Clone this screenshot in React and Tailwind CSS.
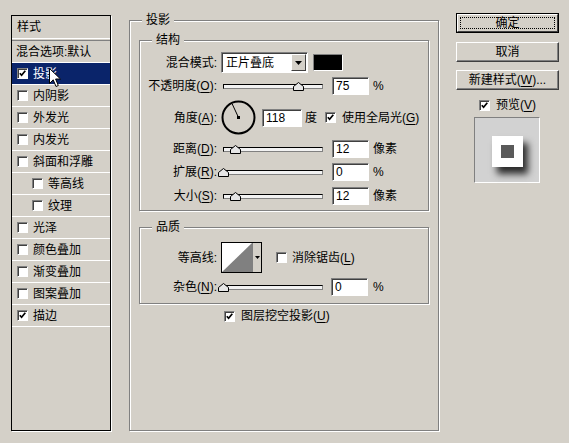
const effects = [
  { label: "混合选项:默认", plain: true },
  { label: "投影", checked: true, selected: true },
  { label: "内阴影" },
  { label: "外发光" },
  { label: "内发光" },
  { label: "斜面和浮雕" },
  { label: "等高线", indent: true },
  { label: "纹理", indent: true },
  { label: "光泽" },
  { label: "颜色叠加" },
  { label: "渐变叠加" },
  { label: "图案叠加" },
  { label: "描边", checked: true },
];

const sunken =
  "border border-[#808080] border-b-white border-r-white shadow-[inset_1px_1px_0_#404040]";

function U({ children }) {
  return <span className="underline underline-offset-[2px]">{children}</span>;
}

function CheckBox({ checked }) {
  return (
    <span
      className={`w-[11px] h-[11px] shrink-0 bg-white flex items-center justify-center ${sunken}`}
    >
      {checked && (
        <svg width="7" height="7" viewBox="0 0 7 7">
          <path d="M0.8 3.2 L2.6 5.3 L6.3 0.8" fill="none" stroke="black" strokeWidth="1.7" />
        </svg>
      )}
    </span>
  );
}

function Field({ value, className = "w-[37px]" }) {
  return (
    <div className={`h-[18px] bg-white pl-[3px] flex items-center ${sunken} ${className}`}>
      {value}
    </div>
  );
}

function Slider({ value }) {
  return (
    <div className="relative ml-[4px] w-[104px] h-[14px] flex items-center px-[2px]">
      <div className="w-full h-[5px] border border-black border-b-[#808080] border-r-[#808080] bg-[#f2f2f2]" />
      <svg
        className="absolute top-[3px]"
        style={{ left: value - 3.5 }}
        width="11"
        height="9"
        viewBox="0 0 11 9"
      >
        <path d="M0.5 8.5 L0.5 4.5 L5.5 0.5 L10.5 4.5 L10.5 8.5 Z" fill="#e6e6e6" stroke="black" />
      </svg>
    </div>
  );
}

function Group({ title, className, children }) {
  return (
    <div
      className={`relative border border-[#808080] shadow-[inset_1px_1px_0_white,1px_1px_0_white] ${className}`}
    >
      <span className="absolute left-[12px] top-[-8px] px-[4px] bg-[#d4d0c8] leading-[14px]">
        {title}
      </span>
      {children}
    </div>
  );
}

function Label({ children }) {
  return <span className="w-[77px] shrink-0 text-right">{children}</span>;
}

function Button({ children, primary }) {
  if (primary) {
    return (
      <div className="h-[20px] border border-black">
        <div className="h-full border border-white border-b-[#404040] border-r-[#404040] p-[2px]">
          <div className="h-full border border-dotted border-black flex items-center justify-center">
            {children}
          </div>
        </div>
      </div>
    );
  }
  return (
    <div className="h-[20px] border border-white border-b-[#404040] border-r-[#404040] shadow-[inset_-1px_-1px_0_#808080] flex items-center justify-center">
      {children}
    </div>
  );
}

function Cursor() {
  return (
    <svg className="absolute left-[37px] top-[5px] z-10" width="13" height="20" viewBox="0 0 13 20">
      <path
        d="M0.5 0.5 L0.5 15.5 L4.2 11.8 L7 18.5 L9.3 17.5 L6.6 11 L11.5 11 Z"
        fill="white"
        stroke="black"
      />
    </svg>
  );
}

export default function App() {
  return (
    <div className="w-[569px] h-[443px] bg-[#d4d0c8] flex items-start pl-[11px] pt-[15px] text-[12px] leading-[14px] text-black font-['Liberation_Sans','Noto_Sans_CJK_SC',sans-serif]">
      {/* effects list */}
      <div className="w-[100px] h-[416px] border border-black shadow-[1px_1px_0_white] flex flex-col">
        <div className="h-[22px] pl-[5px] flex items-center">样式</div>
        <div className="h-[3px] border-t border-white border-b border-b-[#808080]" />
        {effects.map((e) => (
          <div
            key={e.label}
            className={`relative h-[22px] border-b border-white flex items-center gap-[5px] ${
              e.plain ? "pl-[4px]" : e.indent ? "pl-[20px]" : "pl-[5px]"
            } ${e.selected ? "bg-[#0a246a] text-white" : ""}`}
          >
            {!e.plain && <CheckBox checked={e.checked} />}
            <span>{e.label}</span>
            {e.selected && <Cursor />}
          </div>
        ))}
      </div>

      {/* settings */}
      <Group title="投影" className="ml-[18px] mt-[5px] w-[310px] h-[411px] pt-[19px] pl-[9px]">
        <Group title="结构" className="w-[290px] h-[171px] pt-[11px]">
          <div className="flex items-center h-[21px]">
            <Label>混合模式:</Label>
            <div className={`ml-[4px] w-[87px] h-[21px] bg-white flex items-center pl-[4px] pr-[1px] ${sunken}`}>
              <span className="flex-1">正片叠底</span>
              <span className="w-[15px] h-[17px] bg-[#d4d0c8] border border-white border-b-[#404040] border-r-[#404040] flex items-center justify-center">
                <svg width="7" height="4" viewBox="0 0 7 4">
                  <path d="M0 0 H7 L3.5 4 Z" fill="black" />
                </svg>
              </span>
            </div>
            <div className="ml-[5px] w-[30px] h-[17px] bg-black border border-[#808080] border-b-white border-r-white" />
          </div>

          <div className="mt-[4px] flex items-center h-[18px]">
            <Label>
              不透明度(<U>O</U>):
            </Label>
            <Slider value={75} />
            <Field value="75" className="ml-[7px] w-[37px]" />
            <span className="ml-[4px]">%</span>
          </div>

          <div className="mt-[5px] flex items-center h-[35px]">
            <Label>
              角度(<U>A</U>):
            </Label>
            <svg className="ml-[4px]" width="35" height="35" viewBox="0 0 35 35">
              <circle cx="17.5" cy="17.5" r="16" fill="none" stroke="black" strokeWidth="2" />
              <line x1="17.5" y1="17.5" x2="11" y2="3.5" stroke="black" strokeWidth="1" />
              <rect x="16" y="16" width="3" height="3" fill="black" />
            </svg>
            <Field value="118" className="ml-[6px] w-[40px]" />
            <span className="ml-[3px]">度</span>
            <span className="ml-[8px] flex items-center gap-[6px]">
              <CheckBox checked />
              <span>
                使用全局光(<U>G</U>)
              </span>
            </span>
          </div>

          <div className="mt-[5px] flex items-center h-[18px]">
            <Label>
              距离(<U>D</U>):
            </Label>
            <Slider value={12} />
            <Field value="12" className="ml-[7px] w-[37px]" />
            <span className="ml-[4px]">像素</span>
          </div>

          <div className="mt-[5px] flex items-center h-[18px]">
            <Label>
              扩展(<U>R</U>):
            </Label>
            <Slider value={0} />
            <Field value="0" className="ml-[7px] w-[37px]" />
            <span className="ml-[4px]">%</span>
          </div>

          <div className="mt-[6px] flex items-center h-[18px]">
            <Label>
              大小(<U>S</U>):
            </Label>
            <Slider value={12} />
            <Field value="12" className="ml-[7px] w-[37px]" />
            <span className="ml-[4px]">像素</span>
          </div>
        </Group>

        <Group title="品质" className="mt-[16px] w-[290px] h-[77px] pt-[14px]">
          <div className="flex items-center h-[31px]">
            <Label>等高线:</Label>
            <div className="ml-[4px] w-[41px] h-[31px] border border-black flex bg-white">
              <svg width="30" height="29" viewBox="0 0 30 29">
                <path d="M0 29 L30 0 L30 29 Z" fill="#808080" />
              </svg>
              <div className="flex-1 border-l border-[#808080] bg-[#d4d0c8] flex items-center justify-center">
                <svg width="5" height="3" viewBox="0 0 5 3">
                  <path d="M0 0 H5 L2.5 3 Z" fill="black" />
                </svg>
              </div>
            </div>
            <span className="ml-[14px] flex items-center gap-[5px]">
              <CheckBox />
              <span>
                消除锯齿(<U>L</U>)
              </span>
            </span>
          </div>
          <div className="mt-[5px] flex items-center h-[18px]">
            <Label>
              杂色(<U>N</U>):
            </Label>
            <Slider value={0} />
            <Field value="0" className="ml-[6px] w-[37px]" />
            <span className="ml-[5px]">%</span>
          </div>
        </Group>

        <div className="mt-[5px] h-[14px] pl-[85px] flex items-center gap-[6px]">
          <CheckBox checked />
          <span>
            图层挖空投影(<U>U</U>)
          </span>
        </div>
      </Group>

      {/* actions */}
      <div className="ml-[17px] -mt-[2px] w-[103px] flex flex-col">
        <Button primary>确定</Button>
        <div className="mt-[9px]">
          <Button>取消</Button>
        </div>
        <div className="mt-[8px]">
          <Button>
            新建样式(<U>W</U>)...
          </Button>
        </div>
        <div className="mt-[8px] h-[14px] flex items-center justify-center gap-[6px]">
          <CheckBox checked />
          <span>
            预览(<U>V</U>)
          </span>
        </div>
        <div className="mt-[5px] ml-[18px] w-[66px] h-[66px] border border-[#808080] border-b-white border-r-white bg-[#d2d2d2] flex items-center justify-center">
          <div className="w-[31px] h-[31px] mt-[3px] bg-white shadow-[5px_7px_7px_rgba(0,0,0,0.8)] flex items-center justify-center">
            <div className="w-[13px] h-[13px] bg-[#5a5a5a]" />
          </div>
        </div>
      </div>
    </div>
  );
}
